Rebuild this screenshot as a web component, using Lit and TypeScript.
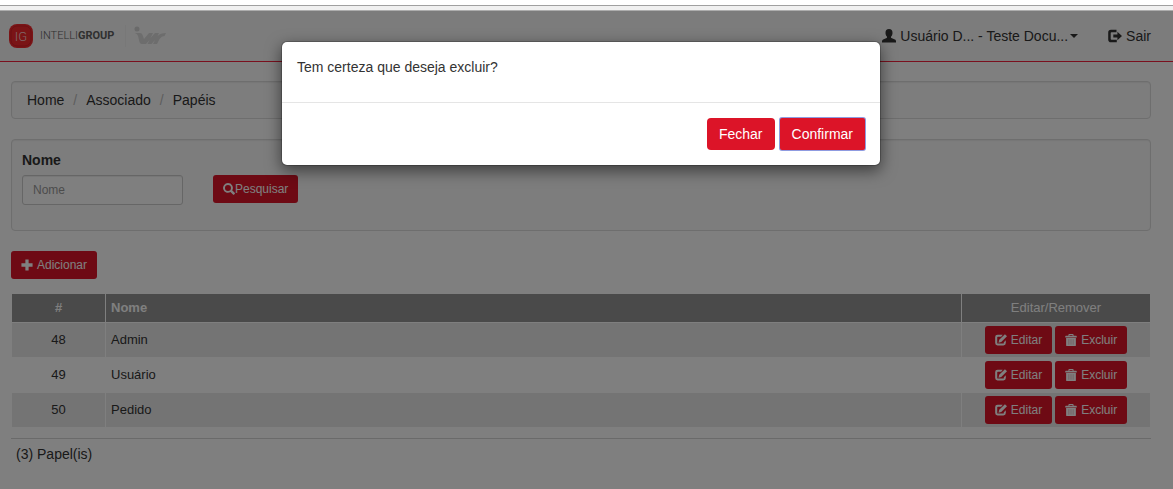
import { LitElement, html, css, svg } from "lit";
import { customElement, property } from "lit/decorators.js";

const icons: Record<string, unknown> = {
  user: svg`<path d="M7 0C9.400 0 10.600 1.600 10.500 3.900c0 1.500-.6 2.900-1.400 3.700-.3.500-.2 1.200.3 1.400l3.500 1.500c.8.400 1.100.9 1.100 1.700V13.500H0v-1.300c0-.8.4-1.300 1.100-1.700L4.600 9c.5-.2.6-.9.3-1.400-.8-.8-1.400-2.200-1.400-3.700C3.400 1.600 4.600 0 7 0z"/>`,
  logout: svg`<path d="M8.500.8H3Q.2.800.2 3.600v6.800q0 2.800 2.800 2.800h5.800v-2.500H3.500q-.8 0-.8-.8V4.100q0-.8.8-.8h5z"/><path d="M9.400 2.700 14 7l-4.600 4.300V8.500H5.300v-3h4.100z"/>`,
  search: svg`<path fill-rule="evenodd" d="M5.800 0a5.700 5.700 0 1 0 2.900 10.600l2.900 2.900q.7.700 1.400 0l.6-.6q.7-.7 0-1.400l-2.900-2.900A5.700 5.700 0 0 0 5.800 0zm0 2.200a3.500 3.500 0 1 1 0 7 3.500 3.500 0 0 1 0-7z"/>`,
  plus: svg`<path d="M5.100.5h3.800v4.600h4.600v3.800H8.900v4.600H5.100V8.900H.5V5.100h4.600z"/>`,
  edit: svg`<path d="M9 .8H3Q.2.800.2 3.600v7q0 2.800 2.800 2.800h6.800q2.800 0 2.800-2.800V7.200L10.300 9.500v.9q0 .8-.8.8H3.400q-.8 0-.8-.8V3.900q0-.8.8-.8h3.700z"/><path d="M11.600.2 14 2.600 7.300 9.200l-3.200.9.800-3.300z"/>`,
  trash: svg`<path fill-rule="evenodd" d="M5 0h4q1 0 1 1v1h3q.7 0 .7.700V4H.3V2.700Q.3 2 1 2h3V1q0-1 1-1zm.2 1.100V2h3.600v-.9z"/><path d="M1.300 4.600h11.400V13q0 1-1 1H2.300q-1 0-1-1z"/><path d="M4.500 6v6.500M7 6v6.500M9.500 6v6.500" stroke="#b4101f" stroke-width=".3"/>`,
};

@customElement("app-icon")
class AppIcon extends LitElement {
  @property() name = "";
  static styles = css`
    :host { display: inline-flex; width: 1em; height: 1em; flex: none; }
    svg { width: 100%; height: 100%; fill: currentColor; }
  `;
  render() {
    return html`<svg viewBox="0 0 14 14" aria-hidden="true">${icons[this.name]}</svg>`;
  }
}

@customElement("app-root")
class AppRoot extends LitElement {
  private rows = [
    { id: 48, nome: "Admin" },
    { id: 49, nome: "Usuário" },
    { id: 50, nome: "Pedido" },
  ];

  static styles = css`
    :host {
      display: flex;
      flex-direction: column;
      min-height: 100vh;
      background: #fff;
      color: #333;
      font: 14px/20px "Liberation Sans", Arial, sans-serif;
    }
    *, *::before, *::after { box-sizing: border-box; }
    a { color: inherit; text-decoration: none; }
    button, input { font: inherit; margin: 0; }
    .chrome {
      height: 6px;
      margin-top: 5px;
      background: #f0f0f0;
      border-top: 1px solid #a0a0a0;
      border-bottom: 1px solid #adadad;
    }
    .page { position: relative; flex: 1; }

    .navbar {
      display: flex;
      justify-content: space-between;
      align-items: center;
      height: 51px;
      padding: 0 22px 0 9px;
      background: #f8f8f8;
      border-bottom: 1px solid #f5203c;
    }
    .brand { display: flex; align-items: center; }
    .logo { display: block; width: 24px; height: 24px; }
    .logo-text { font: 13px "Roboto", sans-serif; font-weight: 300; fill: #ffd0d0; }
    .brand-name {
      width: 85px;
      margin-left: 7px;
      font: 11px/20px "Roboto", sans-serif;
      font-weight: 300;
      color: #606060;
    }
    .brand-name b { font-weight: 700; color: #606060; }
    .partner {
      display: block;
      width: 42px;
      height: 22px;
      border-left: 1px solid #f0f0f0;
      padding-left: 8px;
    }
    .nav { display: flex; align-items: center; gap: 30px; }
    .nav-item {
      display: flex;
      align-items: center;
      padding: 0;
      border: 0;
      background: none;
      color: inherit;
      white-space: nowrap;
    }
    .nav-item app-icon { margin-right: 4px; }
    .caret {
      margin-left: 2px;
      border: 4px solid transparent;
      border-top-color: currentColor;
      border-bottom: 0;
    }

    .content { padding: 19px 22px 20px 11px; }
    .well {
      background: #fafafa;
      border: 1px solid #dcdcdc;
      border-radius: 4px;
      box-shadow: inset 0 1px 1px rgba(0, 0, 0, 0.05);
    }
    .breadcrumb {
      display: flex;
      list-style: none;
      margin: 0 0 20px;
      padding: 8px 15px;
    }
    .breadcrumb li + li::before { content: "/"; padding: 0 9px; color: #bbb; }
    .search {
      display: flex;
      align-items: flex-end;
      gap: 30px;
      padding: 10px 10px 25px;
      margin-bottom: 20px;
    }
    .field { display: flex; flex-direction: column; gap: 5px; width: 161px; }
    .field label { font-weight: bold; }
    .field input {
      width: 100%;
      height: 30px;
      padding: 5px 10px;
      font-size: 12px;
      color: #555;
      background: #fff;
      border: 1px solid #ccc;
      border-radius: 3px;
      box-shadow: inset 0 1px 1px rgba(0, 0, 0, 0.075);
    }
    .field input::placeholder { color: #999; opacity: 1; }
    .btn {
      display: inline-flex;
      align-items: center;
      padding: 6px 12px;
      border: 0;
      border-radius: 4px;
      background: #dc1428;
      color: #fff;
      white-space: nowrap;
    }
    .small { padding: 5px 10px; border-radius: 3px; font-size: 12px; line-height: 18px; }
    .spaced { gap: 4px; }
    .search .btn { margin-bottom: 2px; }

    table {
      width: 100%;
      margin: 14px 0 10px;
      border-collapse: collapse;
      table-layout: fixed;
      font-size: 13px;
    }
    th, td { border: 1px solid #fff; padding: 3px 5px; text-align: left; }
    th { padding: 4px 5px; background: #949494; color: #fff; }
    tbody tr:nth-child(odd) { background: #e9e9e9; }
    .col-id { width: 94px; }
    .col-actions { width: 189px; }
    th.center, td.center { text-align: center; }
    th.plain { font-weight: normal; }
    .actions { display: flex; justify-content: center; gap: 3px; }
    .summary { padding: 5px; border-top: 1px solid #d4d4d4; }

    .backdrop {
      position: absolute;
      inset: 0;
      display: flex;
      justify-content: center;
      align-items: flex-start;
      padding: 30px 11px 0 0;
      background: rgba(0, 0, 0, 0.5);
    }
    .modal {
      width: 600px;
      max-width: 100%;
      background: #fff;
      background-clip: padding-box;
      border: 1px solid rgba(0, 0, 0, 0.2);
      border-radius: 6px;
      box-shadow: 0 5px 15px rgba(0, 0, 0, 0.5);
    }
    .modal-body { padding: 15px; }
    .modal-body p { margin: 0 0 10px; }
    .modal-footer {
      display: flex;
      justify-content: flex-end;
      gap: 5px;
      padding: 15px;
      border-top: 1px solid #e5e5e5;
    }
    .focused { box-shadow: 0 0 0 1px #8f9be0; border-radius: 2px; }
  `;

  render() {
    return html`
      <div class="chrome"></div>
      <div class="page">
        <header class="navbar">
          <a class="brand" href="#">
            <svg class="logo" viewBox="0 0 24 24" aria-hidden="true">
              <rect width="24" height="24" rx="8" fill="#f5282c" />
              <rect x="2" y="2" width="20" height="20" rx="6" fill="none" stroke="#d81e26" stroke-width="1" />
              <text class="logo-text" x="12" y="17" text-anchor="middle">IG</text>
            </svg>
            <span class="brand-name">INTELLI<b>GROUP</b></span>
            <svg class="partner" viewBox="0 0 33 22" aria-hidden="true">
              <circle cx="3" cy="4" r="2.500" fill="#d4d4d4" />
              <path fill="#dadada" d="M1 8h5q2 0 2.500 2l1.500 4 5-6h4l-2.500 5L21 8h4l-1.500 3q3-3 8.500-3l-1.500 3q-3 0-5 3l-2.500 5h-4l2-4-3.500 4h-4l2-4-3.500 4H8q-2 0-2.500-2L4 11Q3.500 9 1 8z" />
            </svg>
          </a>
          <nav class="nav">
            <button class="nav-item" type="button">
              <app-icon name="user"></app-icon>Usuário D... - Teste Docu...<span class="caret"></span>
            </button>
            <a class="nav-item" href="#"><app-icon name="logout"></app-icon>Sair</a>
          </nav>
        </header>
        <main class="content">
          <ol class="breadcrumb well">
            <li><a href="#">Home</a></li>
            <li><a href="#">Associado</a></li>
            <li><a href="#">Papéis</a></li>
          </ol>
          <form class="search well">
            <div class="field">
              <label for="nome">Nome</label>
              <input id="nome" type="text" placeholder="Nome" />
            </div>
            <button class="btn small" type="button"><app-icon name="search"></app-icon>Pesquisar</button>
          </form>
          <button class="btn small spaced" type="button"><app-icon name="plus"></app-icon>Adicionar</button>
          <table>
            <thead>
              <tr>
                <th class="col-id center">#</th>
                <th>Nome</th>
                <th class="col-actions center plain">Editar/Remover</th>
              </tr>
            </thead>
            <tbody>
              ${this.rows.map(
                (row) => html`<tr>
                  <td class="center">${row.id}</td>
                  <td>${row.nome}</td>
                  <td>
                    <div class="actions">
                      <button class="btn small spaced" type="button"><app-icon name="edit"></app-icon>Editar</button>
                      <button class="btn small spaced" type="button"><app-icon name="trash"></app-icon>Excluir</button>
                    </div>
                  </td>
                </tr>`
              )}
            </tbody>
          </table>
          <div class="summary">(${this.rows.length}) Papel(is)</div>
        </main>
        <div class="backdrop">
          <div class="modal" role="dialog" aria-modal="true" aria-labelledby="question">
            <div class="modal-body"><p id="question">Tem certeza que deseja excluir?</p></div>
            <div class="modal-footer">
              <button class="btn" type="button">Fechar</button>
              <button class="btn focused" type="button">Confirmar</button>
            </div>
          </div>
        </div>
      </div>
    `;
  }
}
